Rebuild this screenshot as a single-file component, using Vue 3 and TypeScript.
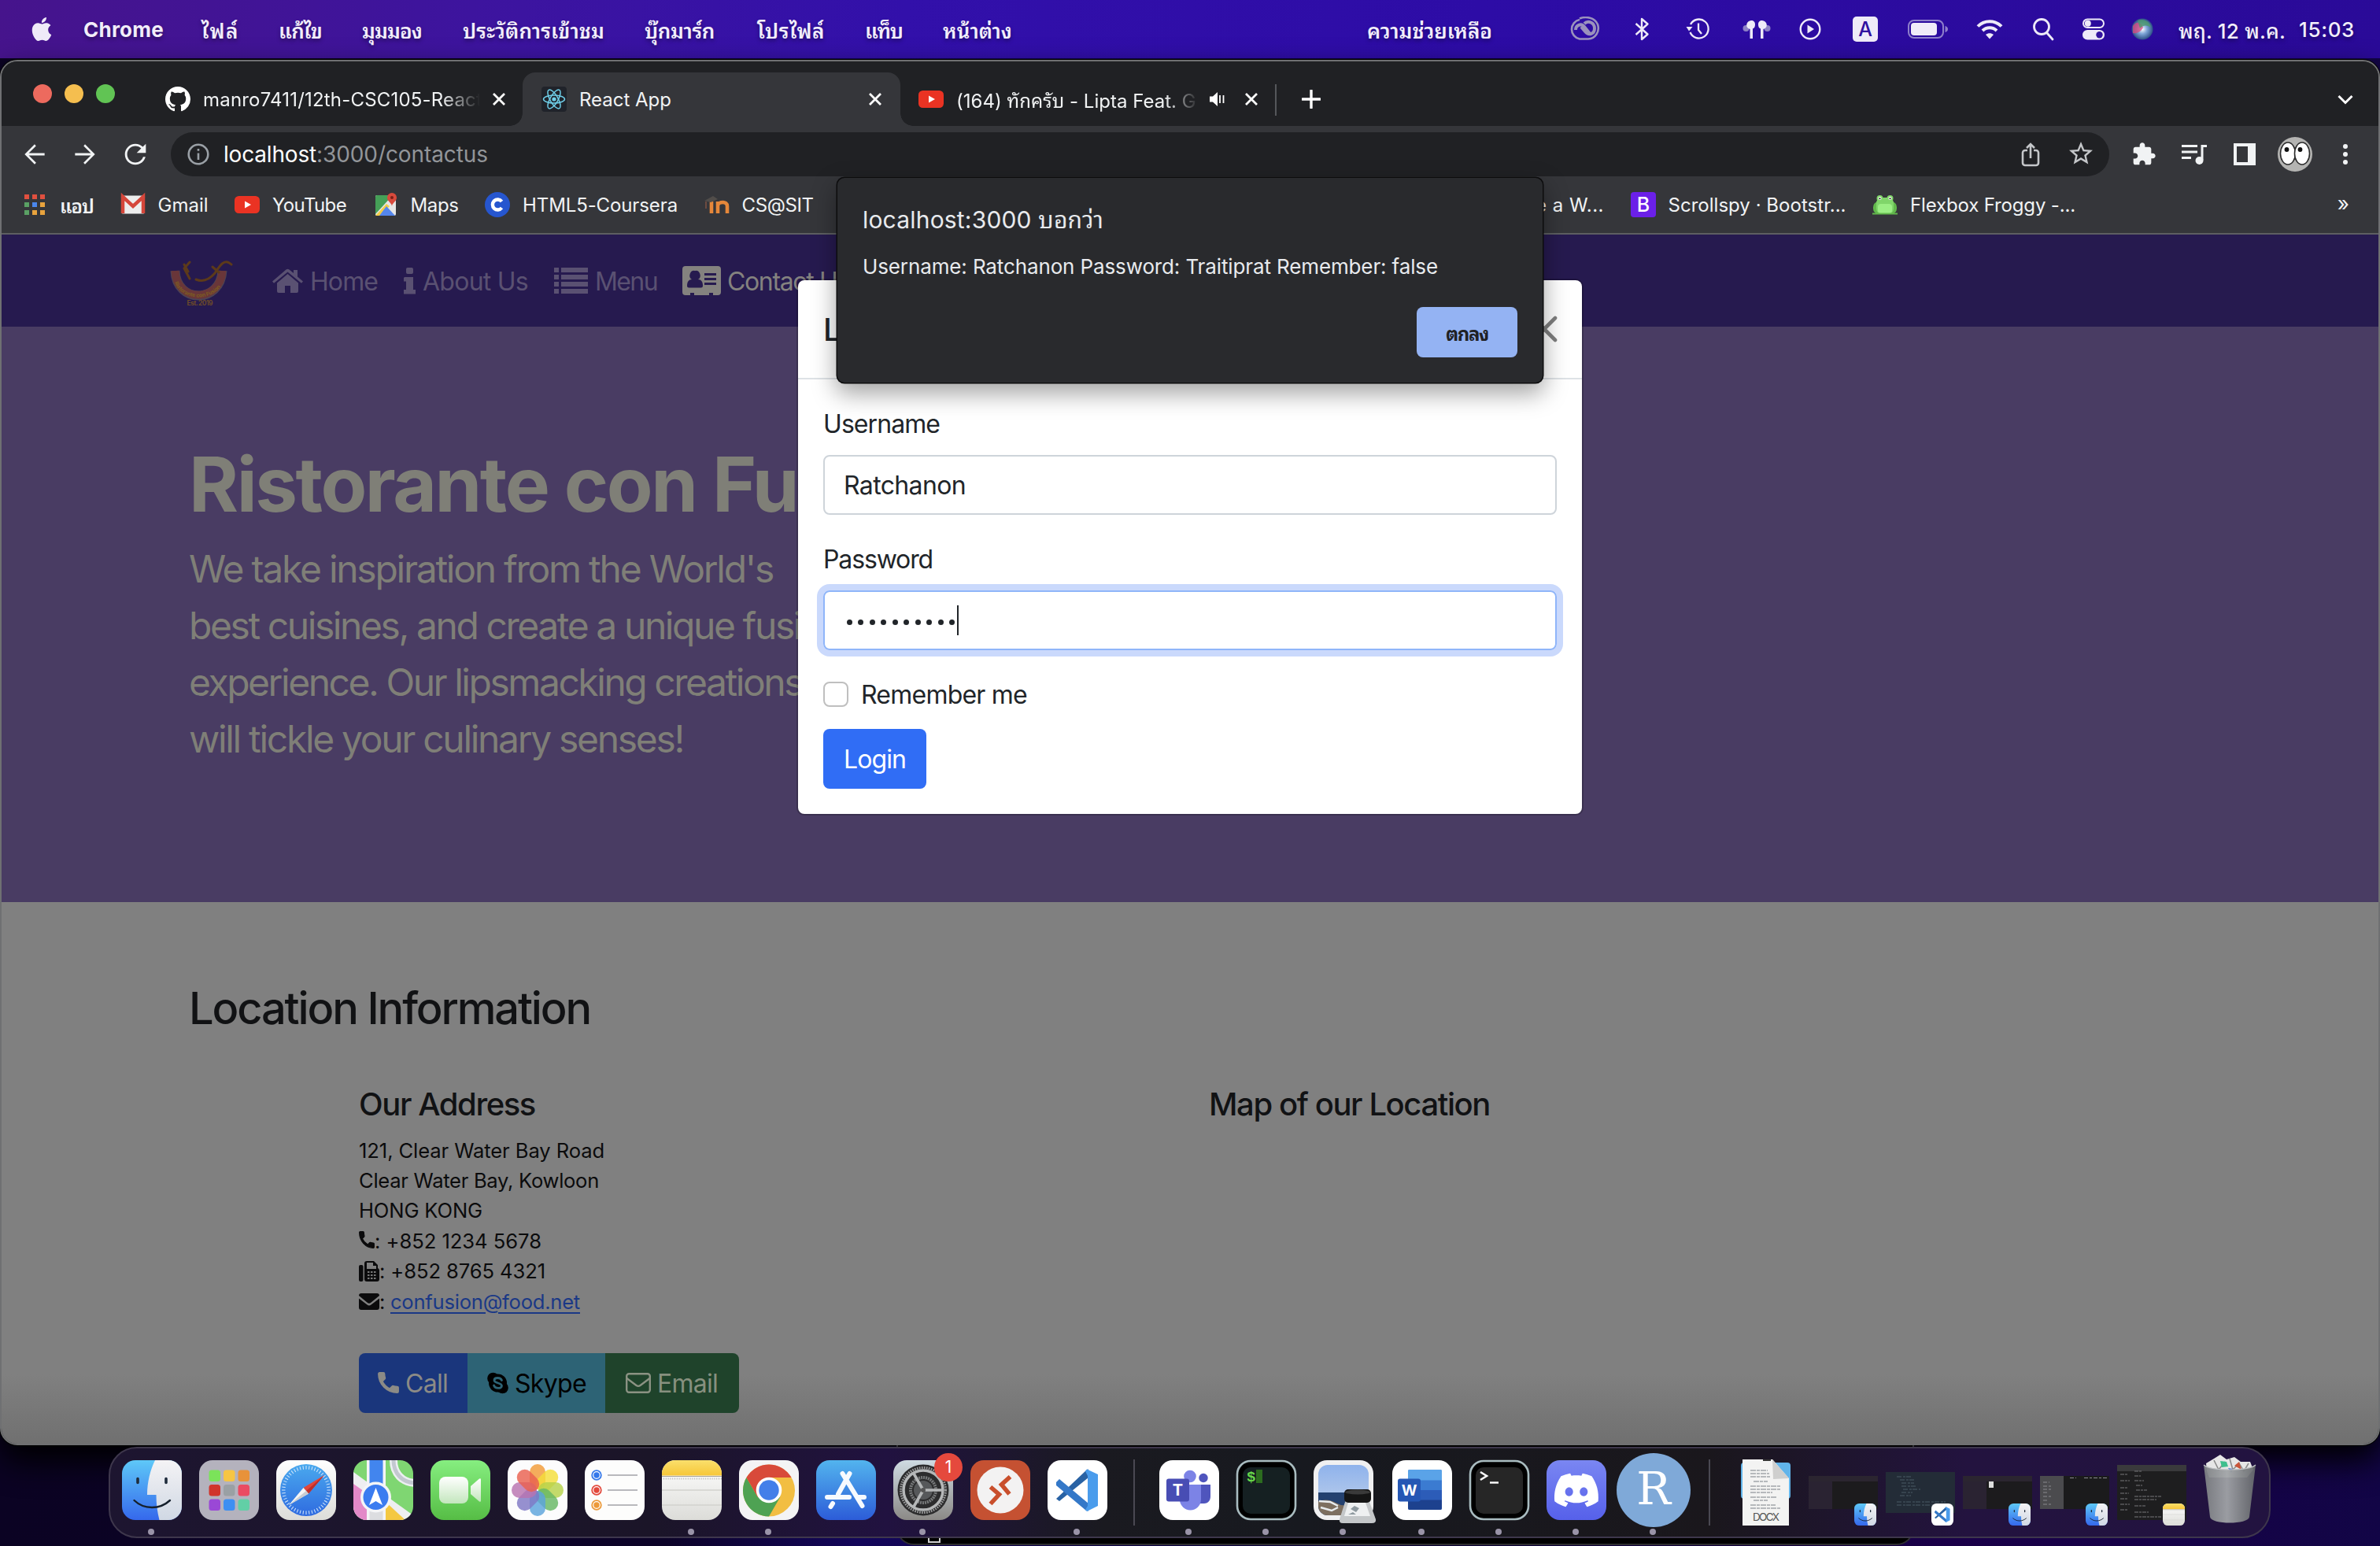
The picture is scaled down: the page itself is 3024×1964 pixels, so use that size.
<script setup lang="ts">
import { ref } from 'vue'

interface Menu { label: string; width: number }

// Tracks the text so that it fills exactly the given number of pixels.
const vFit = {
  mounted(el: HTMLElement, binding: { value: number }) {
    const count = Math.max(1, [...(el.textContent ?? '')].filter((c) => !/[\u0e31\u0e34-\u0e3a\u0e47-\u0e4e]/.test(c)).length)
    const natural = el.getBoundingClientRect().width
    el.style.letterSpacing = `${(binding.value - natural) / count}px`
  },
}

const menus = ref<Menu[]>([
  { label: 'ไฟล์', width: 48 },
  { label: 'แก้ไข', width: 55 },
  { label: 'มุมมอง', width: 76 },
  { label: 'ประวัติการเข้าชม', width: 180 },
  { label: 'บุ๊กมาร์ก', width: 89 },
  { label: 'โปรไฟล์', width: 86 },
  { label: 'แท็บ', width: 48 },
  { label: 'หน้าต่าง', width: 88 },
])
const username = ref('Ratchanon')
const dots = Array.from({ length: 10 }, (_, i) => i)
const ticks = Array.from({ length: 48 }, (_, i) => i * 7.5)
const petals = [
  { c: '#f29b38', a: 0 }, { c: '#f4de3a', a: 45 }, { c: '#b6d24a', a: 90 }, { c: '#66b765', a: 135 },
  { c: '#5ba3dc', a: 180 }, { c: '#7f78c4', a: 225 }, { c: '#b873b0', a: 270 }, { c: '#e9604f', a: 315 },
]
const pads = ['#7be35a', '#f6c544', '#e8923a', '#d0342c', '#9aa0a4', '#ea4b62', '#9a48d6', '#3d8ff2', '#62cfa6']
</script>

<template>
  <div class="screen">
    <svg width="0" height="0" class="defs">
      <defs>
        <linearGradient id="gBlue" x1="0" y1="0" x2="0" y2="1"><stop offset="0" stop-color="#5ec8f8" /><stop offset="1" stop-color="#3568ec" /></linearGradient>
        <linearGradient id="gGrey" x1="0" y1="0" x2="0" y2="1"><stop offset="0" stop-color="#f4f3f5" /><stop offset="1" stop-color="#d0d8e4" /></linearGradient>
        <linearGradient id="gPaper" x1="0" y1="0" x2="0" y2="1"><stop offset="0" stop-color="#ffffff" /><stop offset="1" stop-color="#dcdcd8" /></linearGradient>
        <linearGradient id="gYellow" x1="0" y1="0" x2="0" y2="1"><stop offset="0" stop-color="#fadf6c" /><stop offset="1" stop-color="#f7c738" /></linearGradient>
        <linearGradient id="gGreen" x1="0" y1="0" x2="0" y2="1"><stop offset="0" stop-color="#86ee80" /><stop offset="1" stop-color="#56bd45" /></linearGradient>
        <linearGradient id="gCam" x1="0" y1="0" x2="0" y2="1"><stop offset="0" stop-color="#ffffff" /><stop offset="1" stop-color="#c3e6bd" /></linearGradient>
        <linearGradient id="gStore" x1="0" y1="0" x2="0" y2="1"><stop offset="0" stop-color="#52b4ee" /><stop offset="1" stop-color="#2c5cd8" /></linearGradient>
        <linearGradient id="gSafari" x1="0" y1="0" x2="0" y2="1"><stop offset="0" stop-color="#4aa9ee" /><stop offset="1" stop-color="#2f6be0" /></linearGradient>
        <linearGradient id="gSet" x1="0" y1="0" x2="0" y2="1"><stop offset="0" stop-color="#cfdbe2" /><stop offset="1" stop-color="#8b8986" /></linearGradient>
        <linearGradient id="gDisc" x1="0" y1="0" x2="0" y2="1"><stop offset="0" stop-color="#7a86f2" /><stop offset="1" stop-color="#5660ea" /></linearGradient>
        <linearGradient id="gCan" x1="0" y1="0" x2="1" y2="0"><stop offset="0" stop-color="#7d8083" /><stop offset=".45" stop-color="#a2a5a8" /><stop offset="1" stop-color="#65686b" /></linearGradient>
        <linearGradient id="gSky" x1="0" y1="0" x2="0" y2="1"><stop offset="0" stop-color="#8fb3ec" /><stop offset="1" stop-color="#c3d3ea" /></linearGradient>
        <radialGradient id="gSiri"><stop offset="0" stop-color="#ffffff" /><stop offset=".45" stop-color="#7fa6d8" /><stop offset="1" stop-color="#2c4f86" /></radialGradient>
        <clipPath id="tile"><rect width="76" height="76" rx="17" /></clipPath>
      </defs>
      <symbol id="finder" viewBox="0 0 76 76">
        <g clip-path="url(#tile)">
          <rect width="76" height="76" fill="url(#gBlue)" />
          <path d="M42 0C36 12 32 28 32 44H43.500C43.500 56 45 66 47.500 76H76V0z" fill="url(#gGrey)" />
          <path d="M20 23.500v5M56 23.500v5" stroke="#1f2c3c" stroke-width="3.600" stroke-linecap="round" />
          <path d="M15.500 51C28 63 48 63 61 51" fill="none" stroke="#15202c" stroke-width="2.400" stroke-linecap="round" />
        </g>
      </symbol>
      <symbol id="vscode" viewBox="0 0 76 76">
        <rect width="76" height="76" rx="17" fill="#fff" />
        <path d="M11 49l4 3L52 22V11.500L50 12z" fill="#2962a4" />
        <path d="M11 28l4-4 37 31v9.500l-3-.500L11 32z" fill="#3478c8" />
        <path d="M50 11.500L64 18V58L50 65l-2-2 3-5V20l-3-6z" fill="#4a9cec" />
      </symbol>
      <symbol id="notes" viewBox="0 0 76 76">
        <g clip-path="url(#tile)">
          <rect width="76" height="76" fill="url(#gPaper)" />
          <rect width="76" height="19.500" fill="url(#gYellow)" />
          <path d="M0 20.500H76" stroke="#a8a49a" stroke-width="1.200" />
          <path d="M2 23.500H76" stroke="#b9b9b5" stroke-width="2" stroke-dasharray="1 1.800" />
          <path d="M0 38H76M0 57H76" stroke="#d2d2ce" stroke-width="1.400" />
        </g>
      </symbol>
      <symbol id="phone" viewBox="0 0 24 24">
        <path stroke="currentColor" stroke-width="1.100" d="M6.620 10.790c1.440 2.830 3.760 5.140 6.590 6.590l2.200-2.200c.270-.270.670-.360 1.020-.240 1.120.370 2.330.570 3.570.570.550 0 1 .450 1 1V20c0 .550-.450 1-1 1-9.390 0-17-7.610-17-17 0-.550.450-1 1-1h3.500c.550 0 1 .450 1 1 0 1.250.200 2.450.570 3.570.110.350.030.740-.250 1.020l-2.200 2.200z" />
      </symbol>
      <symbol id="tube" viewBox="0 0 32 32">
        <rect x="0" y="5" width="32" height="22" rx="5.500" fill="#ea3323" /><path d="M13 11.500v9l8-4.500z" fill="#fff" />
      </symbol>
      <symbol id="close" viewBox="0 0 18 18"><path d="M2 2L16 16M16 2L2 16" stroke="#fff" stroke-width="2.800" /></symbol>
    </svg>

    <!-- Menu bar -->
    <header class="menubar">
      <svg class="apple" viewBox="0 0 24 24" width="30" height="32"><path fill="#efeaf8" d="M12.152 6.896c-.948 0-2.415-1.078-3.960-1.040-2.040.027-3.910 1.183-4.961 3.014-2.117 3.675-.546 9.103 1.519 12.090 1.013 1.454 2.208 3.090 3.792 3.039 1.520-.065 2.090-.987 3.935-.987 1.831 0 2.350.987 3.960.948 1.637-.026 2.676-1.480 3.676-2.948 1.156-1.688 1.636-3.325 1.662-3.415-.039-.013-3.182-1.221-3.220-4.857-.026-3.040 2.480-4.494 2.597-4.559-1.429-2.090-3.623-2.324-4.390-2.376-2-.156-3.675 1.090-4.610 1.090zM15.530 3.830c.843-1.012 1.400-2.427 1.245-3.830-1.207.052-2.662.805-3.532 1.818-.780.896-1.454 2.338-1.273 3.714 1.338.104 2.715-.688 3.559-1.701" /></svg>
      <b><span v-fit="102" class="fit">Chrome</span></b>
      <div v-for="m in menus" :key="m.label" class="thai"><span v-fit="m.width" class="fit">{{ m.label }}</span></div>
      <div class="thai"><span v-fit="159" class="fit">ความช่วยเหลือ</span></div>
      <div class="status">
        <svg width="40" height="32" viewBox="0 0 40 32" fill="none" stroke="#9a92bd" stroke-width="2.600"><path d="M14 2.500C22-.500 33 1 37 10c3 9-3 18-12 18.500H14A12.500 12.500 0 0 1 14 4" /><path d="M9 17c0-6 7-9 11-4l8 10M20 9c5-5 13-1 13 6s-7 10-12 4l-5-6" stroke-width="4" /></svg>
        <svg width="24" height="32" viewBox="0 0 24 32" fill="none" stroke="#eeeaf8" stroke-width="2.400" stroke-linejoin="round"><path d="M4.500 9L19.500 22.500 12 29V3l7.500 6.500L4.500 23" /></svg>
        <svg width="32" height="32" viewBox="0 0 32 32" fill="none" stroke="#eeeaf8" stroke-width="2.300"><path d="M6 10A12 12 0 1 1 5.500 20" /><path d="M16 8.500V17l4 5" /><path d="M.500 13h8L4 18.500z" fill="#eeeaf8" stroke="none" /></svg>
        <svg width="36" height="32" viewBox="0 0 36 32" fill="#eeeaf8"><circle cx="4.500" cy="15" r="4" fill="#8e82c6" /><circle cx="31.500" cy="15" r="4" fill="#8e82c6" /><path d="M6 8c4-5 10-3 10 2 0 3-1 5-3 5.500V28H9.500V16C6 15 4 12 6 8zM30 8c-4-5-10-3-10 2 0 3 1 5 3 5.500V28h3.500V16c3.500-1 5.500-4 3.500-8z" /></svg>
        <svg width="30" height="30" viewBox="0 0 30 30" fill="none" stroke="#eeeaf8" stroke-width="2.400"><circle cx="15" cy="15" r="12.300" /><path d="M11.500 9.500v11l8.500-5.500z" fill="#eeeaf8" stroke="none" /></svg>
        <span class="kbd">A</span>
        <svg width="52" height="26" viewBox="0 0 52 26"><rect x="1" y="2" width="44" height="22" rx="7" fill="none" stroke="#8f80cb" stroke-width="2" /><rect x="4" y="5" width="33" height="16" rx="4" fill="#f0ecf9" /><path d="M47.500 9v8c2-.500 3.500-2 3.500-4s-1.500-3.500-3.500-4z" fill="#8f80cb" /></svg>
        <svg width="34" height="26" viewBox="0 0 34 26" fill="none" stroke="#eeeaf8" stroke-width="4"><path d="M2 9.500C10 1 24 1 32 9.500" /><path d="M8 15c5-5 13-5 18 0" /><path d="M12 20c3-2.500 7-2.500 10 0l-5 5.500z" fill="#eeeaf8" stroke="none" /></svg>
        <svg width="28" height="30" viewBox="0 0 28 30" fill="none" stroke="#eeeaf8" stroke-width="2.800"><circle cx="12" cy="12" r="9.500" /><path d="M19 20l7 8" stroke-linecap="round" /></svg>
        <svg width="28" height="28" viewBox="0 0 28 28"><rect x="1" y="1.500" width="26" height="10.500" rx="5.250" fill="none" stroke="#eeeaf8" stroke-width="2" /><circle cx="6.800" cy="6.800" r="4" fill="#eeeaf8" /><rect y="15" width="28" height="12.500" rx="6.250" fill="#eeeaf8" /><circle cx="21.500" cy="21.300" r="4.200" fill="#33129f" /></svg>
        <svg width="28" height="28" viewBox="0 0 28 28"><circle cx="14" cy="14" r="13.500" fill="url(#gSiri)" /><path d="M2 10C6 4 12 4 15 12 12 18 6 20 2 19z" fill="#d9477c" opacity=".75" /><path d="M8 3c8-3 16 2 17 9-6-4-10-3-14 1z" fill="#4c9a6c" opacity=".8" /></svg>
      </div>
      <div><span v-fit="136" class="fit">พฤ. 12 พ.ค.</span></div>
      <div><span v-fit="71" class="fit">15:03</span></div>
    </header>

    <!-- Browser window -->
    <main class="window">
      <div class="tabs">
        <div class="lights"><i class="red" /><i class="amber" /><i class="green" /></div>
        <div class="tab">
          <svg class="fav" viewBox="0 0 16 16"><path fill="#fff" d="M8 0C3.580 0 0 3.580 0 8c0 3.540 2.290 6.530 5.470 7.590.400.070.550-.170.550-.380 0-.190-.010-.820-.010-1.490-2.010.370-2.530-.490-2.690-.940-.090-.230-.480-.940-.820-1.130-.280-.150-.680-.520-.010-.530.630-.010 1.080.580 1.230.820.720 1.210 1.870.870 2.330.660.070-.520.280-.870.510-1.070-1.780-.200-3.640-.890-3.640-3.950 0-.870.310-1.590.820-2.150-.080-.200-.360-1.020.080-2.120 0 0 .670-.210 2.200.820.640-.180 1.320-.270 2-.270.680 0 1.360.090 2 .270 1.530-1.040 2.200-.820 2.200-.820.440 1.100.160 1.920.080 2.120.510.560.820 1.270.820 2.150 0 3.070-1.870 3.750-3.650 3.950.290.250.540.730.540 1.480 0 1.070-.010 1.930-.010 2.200 0 .210.150.460.550.380A8.013 8.013 0 0016 8c0-4.420-3.580-8-8-8z" /></svg>
          <div class="ttl fade"><span v-fit="347" class="fit">manro7411/12th-CSC105-Reac</span>t</div>
          <svg class="x"><use href="#close" /></svg>
        </div>
        <div class="tab active">
          <svg class="fav" viewBox="0 0 32 32"><rect width="32" height="32" rx="4" fill="#20232a" /><g fill="none" stroke="#6fcfe9" stroke-width="1.500"><ellipse cx="16" cy="16" rx="13.500" ry="5" /><ellipse cx="16" cy="16" rx="13.500" ry="5" transform="rotate(60 16 16)" /><ellipse cx="16" cy="16" rx="13.500" ry="5" transform="rotate(120 16 16)" /></g><circle cx="16" cy="16" r="2.600" fill="#6fcfe9" /></svg>
          <div class="ttl"><span v-fit="117" class="fit">React App</span></div>
          <svg class="x"><use href="#close" /></svg>
        </div>
        <div class="tab third">
          <svg class="fav"><use href="#tube" /></svg>
          <div class="ttl fade short"><span v-fit="280" class="fit">(164) ทักครับ - Lipta Feat.</span> G</div>
          <svg class="speaker" width="20" height="20" viewBox="0 0 20 20"><path d="M0 6.500h4L10 1v18L4 13.500H0z" fill="#fff" /><path d="M13 5v10M17.500 5v10" stroke="#fff" stroke-width="1.800" /></svg>
          <svg class="x"><use href="#close" /></svg>
        </div>
        <i class="tabline" />
        <svg class="plus" width="24" height="24" viewBox="0 0 24 24"><path d="M12 1v22M1 12h22" stroke="#fff" stroke-width="3.400" stroke-linecap="round" /></svg>
        <svg class="chev" width="20" height="14" viewBox="0 0 20 14"><path d="M1.500 2L10 10.500 18.500 2" fill="none" stroke="#fff" stroke-width="3" /></svg>
      </div>

      <div class="toolbar">
        <div class="slot"><svg width="38" height="38" viewBox="0 0 24 24"><path fill="#f1f3f4" d="M20 11.100H7.300l5.800-5.800L12 4l-8 8 8 8 1.200-1.200-5.900-5.900H20z" /></svg></div>
        <div class="slot"><svg width="38" height="38" viewBox="0 0 24 24"><path fill="#f1f3f4" d="M4 11.100h12.700l-5.800-5.800L12 4l8 8-8 8-1.200-1.200 5.900-5.900H4z" /></svg></div>
        <div class="slot"><svg width="40" height="40" viewBox="0 0 24 24"><path fill="#f1f3f4" d="M17.650 6.350C16.200 4.900 14.210 4 12 4c-4.420 0-7.990 3.580-7.990 8s3.570 8 7.990 8c3.730 0 6.840-2.550 7.730-6h-1.800c-.820 2.500-3.200 4.300-5.930 4.300-3.450 0-6.250-2.800-6.250-6.300s2.800-6.300 6.250-6.300c1.730 0 3.300.700 4.430 1.870L13 11h7V4l-2.350 2.350z" /></svg></div>
        <div class="omni">
          <svg width="28" height="28" viewBox="0 0 28 28"><circle cx="14" cy="14" r="12.300" fill="none" stroke="#9aa0a6" stroke-width="2.600" /><path d="M14 12.500V21M14 7v2.800" stroke="#9aa0a6" stroke-width="2.600" /></svg>
          <p class="url"><span v-fit="118" class="fit host">localhost</span><span v-fit="218" class="fit">:3000/contactus</span></p>
          <svg class="share" width="24" height="32" viewBox="0 0 24 32" fill="none" stroke="#c4c6c9" stroke-width="2.600"><path d="M8 11H5a3 3 0 0 0-3 3v13a3 3 0 0 0 3 3h14a3 3 0 0 0 3-3V14a3 3 0 0 0-3-3h-3M12 21V3M7 8l5-5 5 5" /></svg>
          <svg class="star" width="36" height="36" viewBox="0 0 24 24"><path fill="#c4c6c9" d="M22 9.240l-7.190-.620L12 2 9.190 8.630 2 9.240l5.460 4.730L5.820 21 12 17.270 18.180 21l-1.630-7.030L22 9.240zM12 15.400l-3.760 2.270 1-4.280-3.320-2.880 4.380-.380L12 6.100l1.710 4.040 4.380.380-3.320 2.880 1 4.280L12 15.400z" /></svg>
        </div>
        <div class="slot first"><svg width="32" height="32" viewBox="0 0 24 24"><path fill="#f1f3f4" d="M20.500 11H19V7c0-1.100-.900-2-2-2h-4V3.500C13 2.120 11.880 1 10.500 1S8 2.120 8 3.500V5H4c-1.100 0-1.990.900-1.990 2v3.800H3.500c1.490 0 2.700 1.210 2.700 2.700s-1.210 2.700-2.700 2.700H2V20c0 1.100.900 2 2 2h3.800v-1.500c0-1.490 1.210-2.700 2.700-2.700 1.490 0 2.700 1.210 2.700 2.700V22H17c1.100 0 2-.900 2-2v-4h1.500c1.380 0 2.500-1.120 2.500-2.500S21.880 11 20.500 11z" /></svg></div>
        <div class="slot"><svg width="34" height="28" viewBox="0 0 34 28"><path d="M1 3.500h20M1 11h20M1 18.500h12" stroke="#f1f3f4" stroke-width="3" /><path d="M27 21.500V3.500h6" fill="none" stroke="#f1f3f4" stroke-width="3" /><circle cx="23.500" cy="22" r="5" fill="#f1f3f4" /></svg></div>
        <div class="slot"><svg width="28" height="28" viewBox="0 0 28 28"><path fill-rule="evenodd" d="M0 0H28V28H0zM4 4V24H18V4z" fill="#f1f3f4" /></svg></div>
        <div class="slot"><svg width="44" height="44" viewBox="0 0 44 44"><circle cx="22" cy="22" r="22" fill="#b4b4b2" /><ellipse cx="13" cy="21" rx="9.500" ry="14" fill="#fff" stroke="#2b2b2b" stroke-width="1.600" /><ellipse cx="31" cy="21" rx="9.500" ry="14" fill="#fff" stroke="#2b2b2b" stroke-width="1.600" /><circle cx="11.500" cy="16" r="2.900" fill="#111" /><circle cx="28.500" cy="16" r="2.900" fill="#111" /></svg></div>
        <div class="slot"><svg width="8" height="28" viewBox="0 0 8 28" fill="#f1f3f4"><circle cx="4" cy="4" r="3" /><circle cx="4" cy="14" r="3" /><circle cx="4" cy="24" r="3" /></svg></div>
      </div>

      <div class="marks">
        <div class="mark"><svg viewBox="0 0 32 32"><g transform="translate(3 3)"><path d="M0 0h6v6H0zM10 0h6v6h-6zM20 0h6v6h-6z" fill="#e0503f" /><path d="M0 10h6v6H0zM0 20h6v6H0z" fill="#5aa164" /><path d="M10 10h6v6h-6z" fill="#4a87ee" /><path d="M20 10h6v6h-6zM10 20h6v6h-6zM20 20h6v6h-6z" fill="#e8a33d" /></g></svg><span v-fit="43" class="fit thai">แอป</span></div>
        <div class="mark"><svg viewBox="0 0 32 32"><rect x="1" y="4.500" width="30" height="23" rx="2" fill="#ededed" /><path d="M3 27V6l13 12L29 6v21" fill="none" stroke="#d5463a" stroke-width="4.500" /></svg><span v-fit="64" class="fit">Gmail</span></div>
        <div class="mark"><svg><use href="#tube" /></svg><span v-fit="94" class="fit">YouTube</span></div>
        <div class="mark"><svg viewBox="0 0 32 32"><rect x="3" y="4" width="26" height="26" rx="2" fill="#e6e6e4" /><path d="M3 6a2 2 0 0 1 2-2h20L3 28z" fill="#45a057" /><path d="M3 30L17 15l4 3L9 30z" fill="#f3cd46" /><path d="M8 30l9-12 11 12z" fill="#5486ec" /><path d="M24 18c0-4-6-6-6-11a6 6 0 0 1 12 0c0 5-6 7-6 11z" fill="#d84a3c" /><circle cx="24" cy="7" r="2" fill="#7c2018" /></svg><span v-fit="61" class="fit">Maps</span></div>
        <div class="mark"><svg viewBox="0 0 32 32"><circle cx="16" cy="16" r="16" fill="#2656cf" /><path d="M21.500 12A6.500 6.500 0 1 0 21.500 20" fill="none" stroke="#fff" stroke-width="4.400" /></svg><span v-fit="197" class="fit">HTML5-Coursera</span></div>
        <div class="mark"><svg viewBox="0 0 32 32"><path d="M9 27V12" stroke="#e5873a" stroke-width="4.600" /><path d="M17 27V12M17 17c1-5 12-6 12 1v9" fill="none" stroke="#e5873a" stroke-width="4.600" /><path d="M0 11l11-6 6 4-9 4z" fill="#514d4a" /><path d="M2 12v9" stroke="#6d4b40" stroke-width="2" /></svg><span v-fit="91" class="fit">CS@SIT</span></div>
        <div class="mark gapped"><span v-fit="151" class="fit">Create a W...</span></div>
        <div class="mark"><svg viewBox="0 0 32 32"><rect width="32" height="32" rx="4" fill="#6b20e8" /><text x="16" y="25" text-anchor="middle" font-size="25" font-weight="500" fill="#fff">B</text></svg><span v-fit="226" class="fit">Scrollspy · Bootstr...</span></div>
        <div class="mark"><svg viewBox="0 0 32 32"><rect x="1" y="12" width="30" height="16" rx="7" fill="#62b94c" /><rect x="5" y="7" width="22" height="21" rx="7" fill="#80d56a" /><circle cx="9.500" cy="8" r="4" fill="#80d56a" /><circle cx="22.500" cy="8" r="4" fill="#80d56a" /><circle cx="9.500" cy="8" r="2" fill="#fff" /><circle cx="22.500" cy="8" r="2" fill="#fff" /><circle cx="9.500" cy="8.300" r="1" fill="#111" /><circle cx="22.500" cy="8.300" r="1" fill="#111" /><rect x="7" y="15" width="18" height="12" rx="4" fill="#9bee84" /><path d="M0 27.500h32" stroke="#62b94c" stroke-width="2" /></svg><span v-fit="210" class="fit">Flexbox Froggy -...</span></div>
        <span class="more">»</span>
      </div>

      <!-- Restaurant page -->
      <nav class="nav">
        <svg class="logo" width="82" height="64" viewBox="0 0 82 64">
          <path d="M7.500 19C9 61 65 61 67.500 19" fill="none" stroke="#4b4456" stroke-width="12" />
          <path d="M7.500 19C9 60 65 60 67.500 19" fill="none" stroke="#693639" stroke-width="10" />
          <path id="curve" d="M6 31C13 60 63 60 70 29" fill="none" />
          <text font-size="6.800" font-weight="700" fill="#7c5c22"><textPath href="#curve" startOffset="3" textLength="70">Ristorante con Fusion</textPath></text>
          <path d="M26 8L19 16 26 29M19 11l5 9M79 11C70 2 64 13 58 22 52 29 44 34 34 30M55 14l8 7" fill="none" stroke="#5c3a1a" stroke-width="3" stroke-linecap="round" />
          <text x="39" y="62.500" text-anchor="middle" font-size="8.500" font-weight="700" fill="#6b4a2a" textLength="33">Est. 2019</text>
        </svg>
        <a class="l1"><svg width="39" height="32" viewBox="0 0 39 32" fill="currentColor"><path d="M19.500 7L33 18.500V29a2 2 0 0 1-2 2h-8v-9h-7v9H8a2 2 0 0 1-2-2V18.500z" /><path d="M0 16.500L17.500 1.500c1.200-1 2.800-1 4 0L27 6V2h5v8.500l7 6-2 2.200L19.500 4.500 2 18.700z" /></svg><span v-fit="86" class="fit">Home</span></a>
        <a class="l2"><svg width="15" height="34" viewBox="0 0 15 34" fill="currentColor"><rect x="3" width="9" height="8" rx="2" /><path d="M1 12h11v16h3v5.500H0V28h3V17.500H0V13z" /></svg><span v-fit="134" class="fit">About Us</span></a>
        <a class="l3"><svg width="43" height="34" viewBox="0 0 43 34" fill="currentColor"><path d="M0 0h6v6H0zM0 9h6v6H0zM0 18h6v6H0zM0 27h6v6H0zM9 0h34v6H9zM9 9h34v6H9zM9 18h34v6H9zM9 27h34v6H9z" /></svg><span v-fit="79" class="fit">Menu</span></a>
        <a class="l4"><svg width="49" height="37" viewBox="0 0 49 37" fill="currentColor"><path fill-rule="evenodd" d="M4 0H45a4 4 0 0 1 4 4V33a4 4 0 0 1-4 4H39V34H34v3H15V34H10v3H4a4 4 0 0 1-4-4V4A4 4 0 0 1 4 0zM16 6a5.500 6 0 0 0-4 11c-4 0-6 3-6 8q0 2.500 2.500 2.500h15Q26 27.500 26 25c0-5-2-8-6-8A5.500 6 0 0 0 16 6zM28 9v3H43V9zM28 15v3H43V15zM28 21v3H43V21z" /></svg><span v-fit="155" class="fit">Contact Us</span></a>
      </nav>
      <section class="jumbo">
        <h1><span v-fit="773" class="fit">Ristorante con Fu</span>sion</h1>
        <p><span v-fit="742" class="fit">We take inspiration from the World's</span></p>
        <p><span v-fit="777" class="fit">best cuisines, and create a unique fusi</span>on</p>
        <p><span v-fit="779" class="fit">experience. Our lipsmacking creations</span></p>
        <p><span v-fit="628" class="fit">will tickle your culinary senses!</span></p>
      </section>
      <section class="info">
        <h3><span v-fit="510" class="fit">Location Information</span></h3>
        <div class="cols">
          <div class="addr">
            <h5><span v-fit="224" class="fit">Our Address</span></h5>
            <address>
              <div><span v-fit="312" class="fit">121, Clear Water Bay Road</span></div>
              <div><span v-fit="305" class="fit">Clear Water Bay, Kowloon</span></div>
              <div><span v-fit="157" class="fit">HONG KONG</span></div>
              <div><svg class="ph" width="20" height="22" viewBox="2.400 2.400 19.200 19.200" preserveAspectRatio="none"><use href="#phone" width="24" height="24" /></svg><span v-fit="212" class="fit">: +852 1234 5678</span></div>
              <div><svg width="26" height="26" viewBox="0 0 26 26"><rect y="5" width="5.500" height="21" rx="2" /><path fill-rule="evenodd" d="M7 3a3 3 0 0 1 3-3h9l5 5v4a3 3 0 0 1 2 3v11a3 3 0 0 1-3 3H10a3 3 0 0 1-3-3zM10 2v8h12V6h-4V2z" /><path d="M11 14h11M11 18h11M11 22h11" stroke="#777" stroke-width="2" stroke-dasharray="2.500 1.500" /></svg><span v-fit="211" class="fit">: +852 8765 4321</span></div>
              <div><svg width="26" height="21" viewBox="0 0 26 21"><path d="M0 3a3 3 0 0 1 3-3h20a3 3 0 0 1 3 3L15 12q-2 1.500-4 0z" /><path d="M0 6.500L10.500 14.500q2.500 1.800 5 0L26 6.500V18a3 3 0 0 1-3 3H3a3 3 0 0 1-3-3z" /></svg><span v-fit="14" class="fit">:&nbsp;</span><a v-fit="241" class="fit">confusion@food.net</a></div>
            </address>
            <div class="btns">
              <button class="call"><svg width="27" height="27" viewBox="2.400 2.400 19.200 19.200" fill="currentColor"><use href="#phone" width="24" height="24" /></svg><span v-fit="54" class="fit">Call</span></button>
              <button class="skype"><svg width="27" height="28" viewBox="0 0 27 28"><circle cx="7.500" cy="8" r="7.300" /><circle cx="19.500" cy="20" r="7.300" /><circle cx="13.500" cy="14" r="11.500" /><path d="M18.500 10.500C17 6.500 9 6.500 9 10.500s9.500 3 9.500 7-8.500 4-10-.500" fill="none" stroke="#2d6375" stroke-width="2.800" stroke-linecap="round" /></svg><span v-fit="91" class="fit">Skype</span></button>
              <button class="mail"><svg width="32" height="26" viewBox="0 0 32 26" fill="none" stroke="#8b9283" stroke-width="2.400"><rect x="1.200" y="1.200" width="29.600" height="23.600" rx="3" /><path d="M1.500 7L13.500 16q2.500 1.800 5 0L30.500 7" /></svg><span v-fit="77" class="fit">Email</span></button>
            </div>
          </div>
          <h5><span v-fit="357" class="fit">Map of our Location</span></h5>
        </div>
      </section>
    </main>

    <!-- Login modal -->
    <div class="modal">
      <div class="mhead"><span>Login</span><svg width="34" height="34" viewBox="0 0 34 34"><path d="M3 3L31 31M31 3L3 31" stroke="#7f7f7f" stroke-width="4.600" stroke-linecap="round" /></svg></div>
      <form class="mbody">
        <label><span v-fit="148" class="fit">Username</span></label>
        <div class="input"><span v-fit="155" class="fit">{{ username }}</span></div>
        <label><span v-fit="139" class="fit">Password</span></label>
        <div class="input focus"><i v-for="d in dots" :key="d" class="dot" /><i class="caret" /></div>
        <div class="check"><i class="box" /><span v-fit="211" class="fit">Remember me</span></div>
        <div class="login"><span v-fit="79" class="fit">Login</span></div>
      </form>
    </div>

    <!-- JavaScript alert -->
    <div class="alert">
      <h2><span v-fit="306" class="fit">localhost:3000 บอกว่า</span></h2>
      <p><span v-fit="731" class="fit">Username: Ratchanon Password: Traitiprat Remember: false</span></p>
      <div class="ok"><span v-fit="54" class="fit">ตกลง</span></div>
    </div>

    <!-- Desktop strip and dock -->
    <div class="under"><i /></div>
    <footer class="dock">
      <div class="app on"><svg><use href="#finder" /></svg></div>
      <div class="app"><svg viewBox="0 0 76 76"><rect width="76" height="76" rx="17" fill="#b4b2bd" /><rect v-for="(c, i) in pads" :key="c" :x="12.500 + (i % 3) * 18.500" :y="12.500 + Math.floor(i / 3) * 18.500" width="14.500" height="14.500" rx="3.500" :fill="c" /></svg></div>
      <div class="app"><svg viewBox="0 0 76 76"><rect width="76" height="76" rx="17" fill="url(#gPaper)" /><circle cx="38" cy="38" r="33" fill="url(#gSafari)" /><path v-for="t in ticks" :key="t" d="M38 7v4.500" stroke="#d7e9fb" stroke-width="1" :transform="`rotate(${t} 38 38)`" /><path d="M61 19L41 42.500 34.500 35z" fill="#e2463b" /><path d="M61 19L41 42.500 38 39z" fill="#bd2f2b" /><path d="M16 57L34.500 35 41 42.500z" fill="#f5f5f5" /><path d="M16 57L38 39l3 3.500z" fill="#c9cdd2" /></svg></div>
      <div class="app"><svg viewBox="0 0 76 76"><g clip-path="url(#tile)"><rect width="76" height="76" fill="#7fd672" /><path d="M0 15L76 70V76H0z" fill="#eeeef1" /><path d="M0 30L17 42V76H0z" fill="#e389c8" /><path d="M40 52L66 76H40z" fill="#f4c842" /><path d="M51 0c0 17 11 28 27 29" fill="none" stroke="#eceff1" stroke-width="10" /><path d="M51 0c0 17 11 28 27 29" fill="none" stroke="#c3c8d0" stroke-width="5" /><rect x="17" width="24" height="76" fill="#f4f4f6" /><rect x="20.500" width="17" height="45" fill="#4285ee" /><rect x="20.500" y="60" width="17" height="16" fill="#dcdde0" /><circle cx="28.500" cy="47" r="19.500" fill="#f4f5f7" /><circle cx="28.500" cy="47" r="16" fill="#3b7cf0" /><path d="M28.500 35L37 57 28.500 52 20 57z" fill="#fff" /></g></svg></div>
      <div class="app"><svg viewBox="0 0 76 76"><rect width="76" height="76" rx="17" fill="url(#gGreen)" /><rect x="11" y="21" width="37" height="34" rx="8" fill="url(#gCam)" /><path d="M51 33L62 23.500q2-1 2 1v27q0 2-2 1L51 43z" fill="url(#gCam)" /></svg></div>
      <div class="app"><svg viewBox="0 0 76 76"><rect width="76" height="76" rx="17" fill="#fcfcfd" /><rect v-for="p in petals" :key="p.a" x="28" y="5" width="20" height="32" rx="10" :fill="p.c" opacity=".82" :transform="`rotate(${p.a} 38 38)`" /></svg></div>
      <div class="app"><svg viewBox="0 0 76 76"><rect width="76" height="76" rx="17" fill="#fdfdfc" /><path d="M29 19H67M29 38H67M29 57H67" stroke="#b9b9bd" stroke-width="1.800" /><g fill="#fff" stroke-width="1.800"><circle cx="15" cy="19" r="5.800" stroke="#3478ea" /><circle cx="15" cy="38" r="5.800" stroke="#e2493c" /><circle cx="15" cy="57" r="5.800" stroke="#ec9a3a" /></g><circle cx="15" cy="19" r="3.700" fill="#3478ea" /><circle cx="15" cy="38" r="3.700" fill="#e2493c" /><circle cx="15" cy="57" r="3.700" fill="#ec9a3a" /></svg></div>
      <div class="app on"><svg><use href="#notes" /></svg></div>
      <div class="app on"><svg viewBox="0 0 76 76"><rect width="76" height="76" rx="17" fill="#f4f4f5" /><circle cx="38" cy="38.500" r="33" fill="#f2be42" /><path d="M38 38.500L9.400 22A33 33 0 0 1 66.600 22H38z" fill="#d84a3a" /><path d="M9.400 22A33 33 0 0 0 38 71.500L52.300 46.700 38 38.500 23.700 46.700z" fill="#4ea253" /><path d="M9.400 22L23.700 46.700 38 38.500 38 22z" fill="#d84a3a" /><circle cx="38" cy="38" r="16.300" fill="#fff" /><circle cx="38" cy="38" r="12.700" fill="#437fe9" /></svg></div>
      <div class="app"><svg viewBox="0 0 76 76"><rect width="76" height="76" rx="17" fill="url(#gStore)" /><g stroke="#f7fafe" stroke-width="6" stroke-linecap="round"><path d="M42.500 17L28 43M33.500 17L58.500 58M14 47H42M54 47h7M21 55l-2.500 4" /></g></svg></div>
      <div class="app on"><svg viewBox="0 0 76 76"><rect width="76" height="76" rx="17" fill="url(#gSet)" /><circle cx="38" cy="38" r="32.500" fill="#2c2c2d" /><circle cx="38" cy="38" r="28.500" fill="none" stroke="#9b9c9d" stroke-width="3" stroke-dasharray="1.600 1.400" /><circle cx="38" cy="38" r="25" fill="none" stroke="#b5b7b8" stroke-width="3.500" /><circle cx="38" cy="38" r="16" fill="none" stroke="#77797a" stroke-width="4" stroke-dasharray="2 1" /><circle cx="38" cy="38" r="12" fill="#56585a" /><path d="M38 38H62M38 38L26 17M38 38L26 59" stroke="#b5b7b8" stroke-width="3.600" /><circle cx="38" cy="38" r="3" fill="#555" /></svg><b class="badge">1</b></div>
      <div class="app"><svg viewBox="0 0 76 76"><rect width="76" height="76" rx="17" fill="#c55132" /><circle cx="38" cy="38" r="29.500" fill="#f3f2f2" /><path d="M50.500 21L39.500 31 49.500 43M25.500 34L36.500 43.500 25.500 55.500" fill="none" stroke="#c94f2c" stroke-width="5.500" /></svg></div>
      <div class="app on"><svg><use href="#vscode" /></svg></div>
      <i class="sep" />
      <div class="app on"><svg viewBox="0 0 76 76"><rect width="76" height="76" rx="17" fill="#fff" /><circle cx="56" cy="22.500" r="5.700" fill="#4f55bd" /><path d="M52 31H65V46c0 6-4 9-8 9h-5z" fill="#4f55bd" /><circle cx="39" cy="20.500" r="7.800" fill="#7c83e6" /><path d="M26 31H53V50a13.500 13.500 0 0 1-27 0z" fill="#7c83e6" /><rect x="9" y="23.500" width="29" height="29" rx="3" fill="#484db4" /><text x="23.500" y="45" text-anchor="middle" font-size="20" font-weight="700" fill="#fff">T</text></svg></div>
      <div class="app on"><svg viewBox="0 0 76 76"><rect x="1" y="1" width="74" height="74" rx="17" fill="#000" stroke="#a9bcc0" stroke-width="2.600" /><rect x="8" y="9" width="60" height="59" rx="10" fill="#152022" /><text x="13" y="27" font-size="19" font-weight="700" fill="#67d84a" class="mono">$</text><rect x="25" y="12" width="8" height="17" fill="#2c6c1f" /></svg></div>
      <div class="app on"><svg viewBox="0 0 76 76"><rect width="76" height="76" rx="17" fill="#f0f0f1" /><rect x="6" y="6" width="64" height="64" rx="12" fill="url(#gSky)" /><path d="M6 41H70V58a12 12 0 0 1-12 12H18A12 12 0 0 1 6 58z" fill="#24416f" /><path d="M6 52q12-4 22 2t20 2v14H18A12 12 0 0 1 6 58z" fill="#7d6f60" /><path d="M7 52l14 1 10 5M9 60l14 4 8-4" stroke="#e8ecef" stroke-width="2.500" fill="none" /><path d="M41 50H70L79 75q1 5-5 5H37q-5 0-4-5z" fill="#c4c7c9" /><path d="M44 54h22l6 17H39z" fill="#eef0f1" /><path d="M47 62l5-4 6 3-4 5zM44 69l6-3 4 3z" fill="#8e999f" /><rect x="39" y="37" width="34" height="17" rx="5" fill="#151515" /><ellipse cx="56" cy="40.500" rx="16" ry="3" fill="#3a3a3a" /></svg></div>
      <div class="app on word"><svg viewBox="0 0 76 76"><rect width="76" height="76" rx="17" fill="#fff" /><rect x="20" y="12" width="43" height="51" rx="2" fill="#3b7bd1" /><path d="M20 25.500V14a2 2 0 0 1 2-2H61a2 2 0 0 1 2 2V25.500z" fill="#5aa3e8" /><path d="M20 38H63V51H20z" fill="#2c5cb8" /><path d="M20 50.500H63V61a2 2 0 0 1-2 2H22a2 2 0 0 1-2-2z" fill="#1d418e" /><rect x="7" y="23.500" width="29" height="29" rx="3" fill="#2557b4" /><text x="21.500" y="45" text-anchor="middle" font-size="19" font-weight="700" fill="#fff">W</text></svg></div>
      <div class="app on"><svg viewBox="0 0 76 76"><rect x="1" y="1" width="74" height="74" rx="17" fill="#000" stroke="#a9bcc0" stroke-width="2.600" /><rect x="8" y="9" width="60" height="59" rx="10" fill="#262626" /><path d="M14 15l8 5-8 5" fill="none" stroke="#fff" stroke-width="2.600" /><path d="M26 28.500H37" stroke="#fff" stroke-width="2.400" /></svg></div>
      <div class="app on"><svg viewBox="0 0 76 76"><rect width="76" height="76" rx="17" fill="url(#gDisc)" /><path transform="translate(10 10) scale(2.330)" fill="#fff" d="M20.317 4.370a19.791 19.791 0 00-4.885-1.515.074.074 0 00-.079.037c-.211.375-.445.865-.608 1.250-1.845-.276-3.680-.276-5.487 0-.164-.393-.406-.874-.618-1.250a.077.077 0 00-.079-.037 19.736 19.736 0 00-4.885 1.515.070.070 0 00-.032.028C.533 9.046-.319 13.580.099 18.058a.082.082 0 00.031.056c2.053 1.508 4.041 2.423 5.993 3.029a.078.078 0 00.084-.028c.462-.630.873-1.295 1.226-1.994a.076.076 0 00-.042-.106c-.653-.248-1.274-.550-1.872-.892a.077.077 0 01-.008-.128c.126-.094.252-.192.372-.291a.074.074 0 01.078-.011c3.928 1.793 8.180 1.793 12.061 0a.074.074 0 01.079.010c.120.099.246.198.373.292a.077.077 0 01-.007.128 12.299 12.299 0 01-1.873.891.077.077 0 00-.041.107c.360.698.772 1.363 1.225 1.993a.076.076 0 00.084.029c1.961-.607 3.950-1.522 6.002-3.029a.077.077 0 00.031-.055c.500-5.177-.838-9.674-3.549-13.660a.061.061 0 00-.031-.029zM8.020 15.331c-1.183 0-2.157-1.086-2.157-2.419 0-1.333.956-2.419 2.157-2.419 1.211 0 2.176 1.095 2.157 2.419 0 1.333-.956 2.419-2.157 2.419zm7.975 0c-1.183 0-2.157-1.086-2.157-2.419 0-1.333.955-2.419 2.157-2.419 1.211 0 2.176 1.095 2.157 2.419 0 1.333-.946 2.419-2.157 2.419z" /></svg></div>
      <div class="app on"><div class="rr">R</div></div>
      <i class="sep two" />
      <div class="files">
        <svg class="docx" width="64" height="84" viewBox="0 0 64 84"><rect x="0" y="4" width="63" height="46" rx="4" fill="#61b4ea" /><path d="M2 0H40L61 24V84H2z" fill="#f3f3f2" /><path d="M40 0L61 24 41 25z" fill="#cfcfce" /><path d="M28 1h10" stroke="#333" stroke-width="2" /><path d="M12 14H34M12 18H36M12 22H38M16 28H34M12 34H50M12 38H50M12 42H40M12 48H46M16 52H34M12 58H44M12 62H50" stroke="#a3a6aa" stroke-width="1.300" stroke-dasharray="7 1 4 1" /><text x="32" y="78" text-anchor="middle" font-size="13.500" fill="#555" textLength="34">DOCX</text></svg>
        <div class="thumb a"><svg class="mini"><use href="#finder" /></svg></div>
        <div class="thumb b"><svg class="code" viewBox="0 0 88 52"><path d="M14 6H34M18 10H38M20 14H36M20 18H40M22 22H44M20 26H34M18 30H32M14 38H76M14 42H70" stroke="#4b5a66" stroke-width="1" stroke-dasharray="6 2 3 1" /></svg><svg class="mini"><use href="#vscode" /></svg></div>
        <div class="thumb c"><i class="file" /><svg class="mini"><use href="#finder" /></svg></div>
        <div class="thumb d"><svg class="code" viewBox="0 0 88 42"><path d="M4 8H12M4 13H14M4 17H15M4 21H11M4 26H14M4 31H10M4 36H14M38 2.500H46M56 2.500H86" stroke="#8a8a8e" stroke-width="1.200" stroke-dasharray="5 2 3 2" /></svg><svg class="mini"><use href="#finder" /></svg></div>
        <div class="thumb e"><svg class="code" viewBox="0 0 88 70"><path d="M4 12H14M4 20H16M4 29H14M4 36H15M4 43H14M4 50H16M4 57H14M22 8H32M22 14H30M22 20H34M24 26H32M24 32H38M22 40H56M22 44H50M22 52H36M22 60H40M22 66H56" stroke="#77777a" stroke-width="1.200" stroke-dasharray="5 1 3 1" /></svg><svg class="mini"><use href="#notes" /></svg></div>
        <svg class="trash" width="68" height="90" viewBox="0 0 68 90"><path d="M5 22L4 12 14 6 22 1l8 6 10-3 8 6 12 0 4 10-8 10H8z" fill="#e6e6e6" /><path d="M14 8l6 12 8-10M34 6l4 14 8-8 6 10 6-10" fill="none" stroke="#8b8b8b" stroke-width="1.600" /><path d="M22 9l8 1 2 6-8 1z" fill="#3fbf8e" /><path d="M40 15l6-5 3 10z" fill="#c8553a" /><path d="M32 18l6 1-2 5z" fill="#3d6fd0" /><path d="M1 14C10 22 58 22 67 14L59 80C58 90 10 90 9 80z" fill="url(#gCan)" opacity=".94" /><path d="M1 14C10 22 58 22 67 14" fill="none" stroke="#bfc2c4" stroke-width="1.200" /></svg>
      </div>
    </footer>
  </div>
</template>

<style>
html, body { margin: 0; background: #0b0420; }
</style>

<style scoped>
* { box-sizing: border-box; }
.screen {
  position: relative; width: 3024px; height: 1964px; overflow: hidden;
  font-family: Inter, "Noto Sans Thai Looped", "Noto Sans Thai", "Noto Sans", "Liberation Sans", sans-serif;
  background: linear-gradient(90deg, #0b0323 0%, #0c0328 28%, #13065a 36%, #0c0338 60%, #1a0048 82%, #120546 100%);
}
.defs { position: absolute; }
.fit { display: inline-block; white-space: pre; width: max-content; }
h1, h2, h3, h5, p { margin: 0; }
svg { display: block; flex: none; }

.menubar {
  height: 74px; display: grid; align-items: center; color: #f2eefa; font-size: 26px; font-weight: 500;
  grid-template-columns: 106px 150px 98px 106px 128px 231px 143px 137px 99px 539px 240px 791px 153px 1fr;
  background: linear-gradient(97deg, #46148c 0%, #3c14a0 22%, #3210aa 38%, #2d0ca6 62%, #2a0a98 100%);
  text-shadow: 0 3px 5px rgba(0, 0, 0, .35);
}
.menubar > * { white-space: nowrap; }
.thai { font-weight: 600; }
.apple { margin-left: 38px; }
.status { display: grid; align-items: center; justify-items: center; grid-template-columns: 72px 74px 70px 78px 58px 82px 78px 78px 58px 70px 54px; }
.kbd { width: 32px; height: 32px; border-radius: 5px; background: #eeeaf8; color: #30109f; font-size: 25px; line-height: 32px; text-align: center; text-shadow: none; }

.window { height: 1760px; margin-top: 2px; border: 2px solid #6f7072; border-radius: 22px; overflow: hidden; background: #35363a; box-shadow: 0 0 0 1px #000, 0 20px 40px #000; display: flex; flex-direction: column; }
.tabs { height: 82px; flex: none; background: #202124; display: flex; align-items: flex-end; color: #f1f3f4; font-size: 24px; }
.lights { width: 182px; height: 82px; padding-left: 40px; display: flex; gap: 16px; align-items: center; }
.lights i { width: 24px; height: 24px; border-radius: 50%; }
.red { background: #ed6a5e; } .amber { background: #f5be4f; } .green { background: #61c454; }
.tab { width: 480px; height: 68px; padding: 0 21px 0 26px; display: flex; align-items: center; position: relative; }
.fav { width: 32px; height: 32px; margin-right: 16px; }
.ttl { white-space: nowrap; overflow: hidden; width: 352px; }
.short { width: 308px; }
.fade { mask-image: linear-gradient(90deg, #000 86%, transparent 100%); }
.x { width: 18px; height: 18px; margin-left: auto; }
.speaker { margin-left: 14px; }
.active { background: #35363a; border-radius: 16px 16px 0 0; padding: 0 23px 0 24px; }
.third { padding: 0 25px 0 23px; }
.active::before, .active::after { content: ''; position: absolute; bottom: 0; width: 16px; height: 16px; }
.active::before { left: -16px; background: radial-gradient(circle at 0 0, transparent 15.500px, #35363a 16px); }
.active::after { right: -16px; background: radial-gradient(circle at 100% 0, transparent 15.500px, #35363a 16px); }
.tabline { width: 2px; height: 40px; margin: 0 0 13px -4px; background: #55575b; }
.plus { margin: 0 0 22px 32px; }
.chev { margin: 0 32px 26px auto; }

.toolbar { height: 72px; flex: none; display: flex; align-items: center; padding-left: 10px; }
.slot { width: 64px; display: flex; justify-content: center; }
.omni { width: 2463px; height: 56px; margin-left: 13px; border-radius: 28px; background: #202124; display: flex; align-items: center; padding-left: 21px; font-size: 28px; }
.url { margin-left: 18px; color: #929599; white-space: nowrap; }
.host { color: #fff; }
.share { margin-left: auto; }
.star { margin: -2px 18px 0 34px; }
.first { margin-left: 12px; }

.marks { height: 66px; flex: none; padding: 0 0 8px 26px; display: flex; align-items: center; gap: 33.500px; color: #f1f3f4; font-size: 24px; border-bottom: 2px solid #5d5f61; }
.mark { display: flex; align-items: center; gap: 16px; }
.mark svg { width: 32px; height: 32px; }
.mark text { font-family: Inter, sans-serif; }
.gapped { margin-left: 820px; }
.more { margin: 0 37px 4px auto; font-size: 26px; }

.nav { height: 117px; flex: none; background: #261a4f; color: #5a5172; display: flex; align-items: center; font-size: 32px; padding: 1px 0 0 213px; }
.nav a { display: flex; align-items: center; gap: 9px; }
.l1 { margin-left: 49px; } .l2 { margin-left: 33px; } .l3 { margin-left: 33px; } .l4 { margin-left: 32px; }
.nav .l4 { color: #84827f; gap: 8px; }
.nav a svg { margin-top: -1px; }

.jumbo { height: 731px; flex: none; background: #493c63; color: #7f7f77; padding: 143px 0 0 238px; }
.jumbo h1 { font-size: 96px; line-height: 115px; font-weight: 700; margin-bottom: 14px; white-space: nowrap; }
.jumbo p { font-size: 48px; line-height: 72px; white-space: nowrap; }

.info { flex: 1; padding: 102px 0 0 238px; color: #111214; background: linear-gradient(180deg, #808080 0, #808080 600px, #707070 100%); }
.info h3 { font-size: 56px; line-height: 67px; font-weight: 500; }
.cols { display: flex; padding: 64px 0 0 216px; }
.addr { width: 1080px; }
.cols h5 { font-size: 40px; line-height: 48px; font-weight: 500; margin-bottom: 15px; }
address { font-style: normal; font-size: 25.600px; color: #0b0b0c; }
address div { display: flex; align-items: center; height: 38.400px; }
address svg { fill: #0b0b0c; }
address .ph { margin-top: -3px; }
address a { color: #1a3886; text-decoration: underline; text-decoration-thickness: 2px; text-underline-offset: 4px; }
.btns { display: flex; margin-top: 47px; height: 76px; width: 483px; border-radius: 8px; overflow: hidden; }
.btns button { border: 0; padding: 0; display: flex; align-items: center; gap: 8px; font: 400 32px Inter, sans-serif; }
.btns svg { margin-top: -1px; }
.btns .call { width: 138px; padding-left: 24px; background: #1a367c; color: #8c8b86; }
.btns .skype { width: 175px; padding-left: 25px; background: #2d6375; color: #000; }
.btns .mail { width: 170px; padding-left: 26px; background: #1f432b; color: #87907f; }

.modal { position: absolute; left: 1014px; top: 356px; width: 996px; height: 678px; background: #fff; border-radius: 8px; color: #212529; font-size: 32px; box-shadow: 0 0 0 2px rgba(0, 0, 0, .2); }
.mhead { height: 126px; border-bottom: 2px solid #dee2e6; padding: 0 31px 0 32px; display: flex; align-items: center; justify-content: space-between; font-size: 40px; font-weight: 500; }
.mbody { padding: 32px; display: flex; flex-direction: column; align-items: flex-start; }
.mbody label { line-height: 48px; padding-top: 1px; margin-bottom: 15px; }
.input { width: 932px; height: 76px; border: 2px solid #ced4da; border-radius: 8px; padding-left: 24px; display: flex; align-items: center; margin-bottom: 32px; }
.focus { border-color: #8fb5f9; box-shadow: 0 0 0 8px #cad9fc; }
.dot { width: 7px; height: 7px; margin: 5px 3.750px 0; border-radius: 50%; background: #212529; }
.caret { width: 2px; height: 38px; background: #212529; margin-left: -1px; }
.check { height: 48px; display: flex; align-items: center; gap: 16px; }
.box { width: 32px; height: 32px; border: 2px solid #bfbfbf; border-radius: 8px; }
.login { margin-top: 20px; width: 131px; height: 76px; border-radius: 8px; background: #306df5; color: #fff; display: flex; align-items: center; justify-content: center; }

.alert { position: absolute; left: 1064px; top: 226px; width: 896px; height: 260px; border-radius: 9px; background: #292a2d; color: #e8eaed; padding: 32px; box-shadow: 0 0 0 1.500px #0c0c0d, 0 12px 30px 2px rgba(0, 0, 0, .36); display: flex; flex-direction: column; }
.alert h2 { font-size: 30px; line-height: 42px; font-weight: 400; }
.alert p { font-size: 26px; line-height: 36px; margin-top: 21px; }
.ok { align-self: flex-end; width: 128px; height: 64px; margin-top: 33px; border-radius: 8px; background: #94b3f3; color: #202124; font-size: 24px; font-weight: 700; display: flex; align-items: center; justify-content: center; }

.under { position: absolute; left: 1139px; top: 1836px; width: 1293px; height: 127px; background: #000; border: 2px solid #2e2e30; border-top: 0; border-radius: 0 0 22px 22px; }
.under i { position: absolute; left: 38px; bottom: 1px; width: 16px; height: 20px; border: 2px solid #cfcfcf; }
.dock { position: absolute; left: 138px; top: 1838px; width: 2747px; height: 116px; border: 2px solid #3e374c; border-radius: 36px; padding-left: 15px; display: flex; align-items: center; gap: 22px; background: linear-gradient(90deg, #1d1530 0%, #1b1528 25%, #211240 36%, #1a1a20 46%, #17191f 55%, #1a171c 74%, #23133f 86%, #221340 100%); }
.app { width: 76px; height: 76px; margin-bottom: 6px; position: relative; flex: none; display: flex; align-items: center; justify-content: center; }
.app svg { width: 76px; height: 76px; overflow: visible; }
.on::after { content: ''; position: absolute; left: 33px; top: 87px; width: 8px; height: 8px; border-radius: 50%; background: #9a94a8; }
.badge { position: absolute; right: -12px; top: -9px; width: 36px; height: 36px; border-radius: 50%; background: #e5493d; color: #fff; font-size: 21px; font-weight: 400; line-height: 36px; text-align: center; }
.sep { width: 2px; height: 84px; margin: 0 9px 0 11px; background: #4a4852; flex: none; }
.word { margin-left: 2px; }
.rr { width: 94px; height: 94px; flex: none; border-radius: 50%; background: #7fa9d8; color: #fff; font: 400 58px/90px "DejaVu Serif", "Liberation Serif", serif; text-align: center; }
.mono { font-family: "Liberation Mono", monospace; }
.two { margin-left: 10px; }
.files { display: flex; align-items: center; gap: 10px; height: 100%; margin-left: -15px; }
.docx { margin: 0 12px 0 23px; }
.thumb { position: relative; width: 88px; flex: none; background: linear-gradient(#2b2530 0 7px, transparent 7px), linear-gradient(90deg, #2a2332 30px, #1c1b1d 30px); }
.a, .c, .d { height: 42px; }
.d { background: linear-gradient(90deg, #4b4b4e 30px, #1b1b1c 30px); }
.b { height: 52px; background: #232c37; }
.e { height: 70px; background: linear-gradient(#3a3a3c 0 8px, transparent 8px), #1e1e1f; }
.code { position: absolute; inset: 0; width: 100%; height: 100%; }
.mini { position: absolute; right: 2px; top: calc(50% + 14px); width: 28px; height: 28px; }
.file { position: absolute; left: 33px; top: 7px; width: 6px; height: 8px; background: #ddd; }
.trash { margin: -9px 0 0 11px; }
</style>
